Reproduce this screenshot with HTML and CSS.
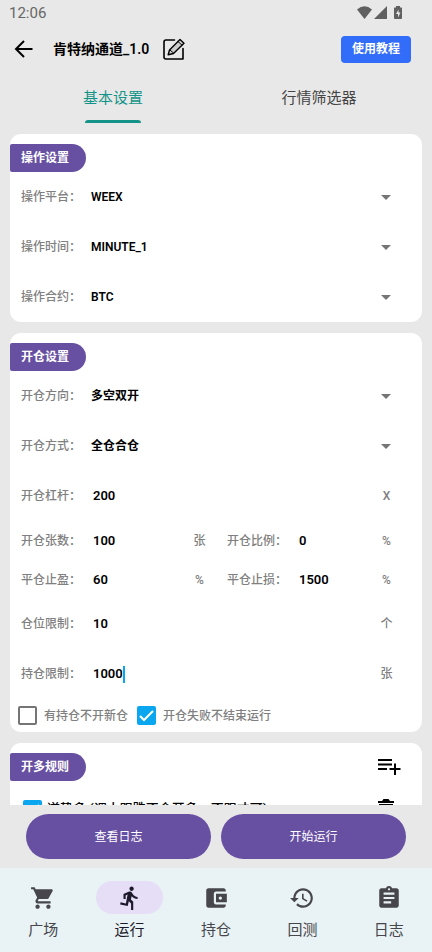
FILE: index.html
```html
<!DOCTYPE html>
<html lang="zh-CN">
<head>
  <meta charset="UTF-8">
  <meta name="viewport" content="width=device-width, initial-scale=1">
  <title>肯特纳通道_1.0</title>
  <link rel="stylesheet" href="styles.css">
</head>
<body>

  <div class="status">
    <span>12:06</span>
    <svg class="status-icons" width="48" height="16" viewBox="0 0 48 16" aria-hidden="true">
      <path d="M1 4.500Q8.500-2 16 4.500L8.500 14z"/>
      <path d="M31 1v13H18z"/>
      <path fill-rule="evenodd" d="M40 1h4v1.500h1.500q.5 0 .5.500V13q0 1-1 1h-6q-1 0-1-1V3q0-.5.500-.5H40zM42.500 4.500l-2.500 4.500h2v3.500l2.500-5h-2z"/>
    </svg>
  </div>

  <header class="header">
    <button class="icon-btn" type="button" aria-label="返回">
      <svg width="20" height="20" viewBox="0 0 20 20" fill="none" stroke="currentColor" stroke-width="2"><path d="M18.500 10H2.500M10 2L2 10l8 8"/></svg>
    </button>
    <h1 class="title">肯特纳通道_1.0</h1>
    <button class="icon-btn" type="button" aria-label="编辑">
      <svg width="22" height="22" viewBox="0 0 22 22" fill="none" stroke="currentColor" stroke-width="1.600" stroke-linejoin="round" stroke-linecap="round">
        <path d="M11.500 2H3Q1 2 1 4v15q0 2 2 2h17V10.500"/>
        <path fill="#ccc" stroke-width="1.400" d="M6.500 12L17 1.500l4 3.700L10.500 15.500l-5.300 1.300z"/>
        <path stroke-width="1" d="M15 3.500l4 3.700M7 12l3.500 3"/>
      </svg>
    </button>
    <a class="tutorial" href="#tutorial">使用教程</a>
  </header>

  <nav class="tabs">
    <a class="tab is-active" href="#basic">基本设置</a>
    <a class="tab" href="#filter">行情筛选器</a>
  </nav>

  <main class="content">
    <section class="card">
      <h2 class="badge">操作设置</h2>
      <div class="row">
        <label for="platform">操作平台：</label>
        <select id="platform"><option>WEEX</option></select>
      </div>
      <div class="row">
        <label for="period">操作时间：</label>
        <select id="period"><option>MINUTE_1</option></select>
      </div>
      <div class="row">
        <label for="contract">操作合约：</label>
        <select id="contract"><option>BTC</option></select>
      </div>
    </section>

    <section class="card">
      <h2 class="badge">开仓设置</h2>
      <div class="row">
        <label for="direction">开仓方向：</label>
        <select id="direction"><option>多空双开</option></select>
      </div>
      <div class="row">
        <label for="mode">开仓方式：</label>
        <select id="mode"><option>全仓合仓</option></select>
      </div>
      <div class="row">
        <label for="lever">开仓杠杆：</label>
        <input id="lever" type="text" inputmode="numeric" value="200">
        <span class="unit">X</span>
      </div>
      <div class="pair">
        <div class="row">
          <label for="count">开仓张数：</label>
          <input id="count" type="text" inputmode="numeric" value="100">
          <span class="unit">张</span>
        </div>
        <div class="row">
          <label for="ratio">开仓比例：</label>
          <input id="ratio" type="text" inputmode="numeric" value="0">
          <span class="unit">%</span>
        </div>
        <div class="row">
          <label for="profit">平仓止盈：</label>
          <input id="profit" type="text" inputmode="numeric" value="60">
          <span class="unit">%</span>
        </div>
        <div class="row">
          <label for="loss">平仓止损：</label>
          <input id="loss" type="text" inputmode="numeric" value="1500">
          <span class="unit">%</span>
        </div>
      </div>
      <div class="row">
        <label for="slots">仓位限制：</label>
        <input id="slots" type="text" inputmode="numeric" value="10">
        <span class="unit">个</span>
      </div>
      <div class="row">
        <label for="hold">持仓限制：</label>
        <input id="hold" class="is-editing" type="text" inputmode="numeric" value="1000">
        <span class="caret"></span>
        <span class="unit">张</span>
      </div>
      <div class="checks">
        <label class="check"><input type="checkbox">有持仓不开新仓</label>
        <label class="check"><input type="checkbox" checked>开仓失败不结束运行</label>
      </div>
    </section>

    <section class="card">
      <div class="card-head">
        <h2 class="badge">开多规则</h2>
        <button class="icon-btn" type="button" aria-label="添加规则">
          <svg width="24" height="18" viewBox="0 0 24 18" fill="currentColor"><path d="M1 1h14v2H1zM1 5.500h14v2H1zM1 10h9v2H1zM17 5.500h2V10h4.500v2H19v5h-2v-5h-4.500v-2H17z"/></svg>
        </button>
      </div>
      <div class="rule">
        <label class="check"><input type="checkbox" checked>逆势多 (调大跟跌不会开多，不跟才可)</label>
        <button class="icon-btn" type="button" aria-label="删除规则">
          <svg width="16" height="20" viewBox="0 0 16 20" fill="currentColor"><path d="M0 2h4l1.500-2h5L12 2h4v2H0zM1 5h14v13q0 2-2 2H3q-2 0-2-2z"/></svg>
        </button>
      </div>
    </section>
  </main>

  <div class="actions">
    <button class="action" type="button">查看日志</button>
    <button class="action" type="button">开始运行</button>
  </div>

  <nav class="bottom-nav">
    <a class="nav-item" href="#market">
      <span class="nav-icon"><svg width="26" height="26" viewBox="0 0 24 24"><path d="M7 18c-1.100 0-1.990.9-1.990 2S5.900 22 7 22s2-.9 2-2-.9-2-2-2zM1 2v2h2l3.600 7.590-1.350 2.450c-.16.280-.25.610-.25.960 0 1.100.9 2 2 2h12v-2H7.420c-.14 0-.25-.11-.25-.25l.03-.12.900-1.630h7.450c.75 0 1.410-.41 1.750-1.030l3.580-6.490A1 1 0 0 0 20 4H5.210l-.94-2H1zm16 16c-1.100 0-1.990.9-1.990 2s.89 2 1.990 2 2-.9 2-2-.9-2-2-2z"/></svg></span>
      广场
    </a>
    <a class="nav-item is-active" href="#run">
      <span class="nav-icon"><svg width="26" height="26" viewBox="0 0 24 24"><path d="M13.490 5.480c1.100 0 2-.9 2-2s-.9-2-2-2-2 .9-2 2 .9 2 2 2zm-3.600 13.900l1-4.400 2.100 2v6h2v-7.500l-2.100-2 .6-3c1.300 1.500 3.300 2.500 5.500 2.500v-2c-1.900 0-3.500-1-4.300-2.400l-1-1.600c-.4-.6-1-1-1.700-1-.3 0-.5.100-.8.100l-5.200 2.200v4.700h2v-3.400l1.800-.7-1.600 8.100-4.900-1-.4 2 7 1.400z"/></svg></span>
      运行
    </a>
    <a class="nav-item" href="#positions">
      <span class="nav-icon"><svg width="26" height="26" viewBox="0 0 24 24"><path d="M21 18v1c0 1.100-.9 2-2 2H5c-1.110 0-2-.9-2-2V5c0-1.100.89-2 2-2h14c1.100 0 2 .9 2 2v1h-9c-1.110 0-2 .9-2 2v8c0 1.100.89 2 2 2h9zm-9-2h10V8H12v8zm4-2.500c-.83 0-1.500-.67-1.500-1.500s.67-1.500 1.500-1.500 1.500.67 1.500 1.500-.67 1.500-1.500 1.500z"/></svg></span>
      持仓
    </a>
    <a class="nav-item" href="#backtest">
      <span class="nav-icon"><svg width="26" height="26" viewBox="0 0 24 24"><path d="M13 3c-4.970 0-9 4.030-9 9H1l3.890 3.890.07.14L9 12H6c0-3.870 3.130-7 7-7s7 3.130 7 7-3.130 7-7 7c-1.930 0-3.680-.79-4.940-2.060l-1.420 1.420C8.270 19.990 10.510 21 13 21c4.970 0 9-4.030 9-9s-4.030-9-9-9zm-1 5v5l4.280 2.540.72-1.210-3.500-2.080V8H12z"/></svg></span>
      回测
    </a>
    <a class="nav-item" href="#logs">
      <span class="nav-icon"><svg width="26" height="26" viewBox="0 0 24 24"><path d="M19 3h-4.180C14.400 1.840 13.300 1 12 1c-1.300 0-2.400.84-2.820 2H5c-1.100 0-2 .9-2 2v14c0 1.100.9 2 2 2h14c1.100 0 2-.9 2-2V5c0-1.100-.9-2-2-2zm-7 0c.55 0 1 .45 1 1s-.45 1-1 1-1-.45-1-1 .45-1 1-1zm2 14H7v-2h7v2zm3-4H7v-2h10v2zm0-4H7V7h10v2z"/></svg></span>
      日志
    </a>
  </nav>

</body>
</html>
```
FILE: styles.css
```css
:root {
  --purple: #6750a1;
  --teal: #149488;
  --blue: #0ba6f0;
  --gray: #808080;
}

* {
  box-sizing: border-box;
}

body {
  background: #e8e8e8;
  color: #000;
  display: flex;
  flex-direction: column;
  font: 12px/20px Roboto, "Noto Sans CJK SC", sans-serif;
  height: 100vh;
  margin: 0;
}

a {
  color: inherit;
  text-decoration: none;
}

button,
input,
select {
  color: inherit;
  font: inherit;
}

.icon-btn {
  background: none;
  border: 0;
  display: flex;
  padding: 0;
}

/* Top */
.status {
  align-items: center;
  color: #666;
  display: flex;
  font-size: 15px;
  height: 26px;
  justify-content: space-between;
  padding: 0 28px 0 9px;
}

.status-icons {
  fill: #606060;
}

.header {
  align-items: center;
  display: flex;
  height: 46px;
  padding: 0 21px 0 14px;
}

.title {
  font-size: 14px;
  font-weight: 600;
  margin: 0 14px 0 19px;
}

.tutorial {
  background: #326dfa;
  border-radius: 4px;
  color: #fff;
  font-weight: 700;
  line-height: 27px;
  margin-left: auto;
  padding: 0 11px;
}

.tabs {
  display: flex;
  height: 51px;
  padding: 0 10px;
}

.tab {
  align-items: center;
  color: #444;
  display: flex;
  flex: 1;
  flex-direction: column;
  font-size: 15px;
  line-height: 49px;
  padding-top: 2px;
}

.tab.is-active {
  color: var(--teal);
}

.tab.is-active::after {
  background: var(--teal);
  border-radius: 3px 3px 0 0;
  content: "";
  flex: none;
  height: 3px;
  margin-top: -3px;
  width: 56px;
}

/* Cards */
.content {
  display: flex;
  flex: 1;
  flex-direction: column;
  gap: 11px;
  min-height: 0;
  overflow-y: auto;
  padding: 11px 10px 0;
  scrollbar-width: none;
}

.card {
  background: #fff;
  border-radius: 11px;
  flex: none;
  padding-top: 10px;
}

.card-head {
  align-items: center;
  display: flex;
  justify-content: space-between;
  padding-right: 21px;
}

.badge {
  background: var(--purple);
  border-radius: 2px 14px 14px 2px;
  color: #fff;
  font-size: 12px;
  font-weight: 600;
  line-height: 28px;
  margin: 0;
  padding: 0 17px 0 11px;
  width: fit-content;
}

.row {
  align-items: center;
  color: var(--gray);
  display: flex;
  font-weight: 500;
  height: 50px;
  padding: 0 29px 0 11px;
}

.row label {
  flex: none;
  width: 70px;
}

.row select,
.row input {
  background: transparent;
  border: 0;
  color: #000;
  flex: 1;
  font-weight: 600;
  min-width: 0;
  outline: 0;
  padding: 0;
}

.row select {
  appearance: none;
  background: url("data:image/svg+xml,%3Csvg xmlns='http://www.w3.org/2000/svg' width='10' height='5'%3E%3Cpath fill='%23757575' d='M0 0h10L5 5z'/%3E%3C/svg%3E") no-repeat right 2px center;
}

.row input {
  font-size: 13px;
  padding-left: 2px;
}

.row .is-editing {
  field-sizing: content;
  flex: none;
}

.caret {
  background: var(--blue);
  height: 17px;
  width: 2px;
}

.unit {
  margin-left: auto;
  min-width: 13px;
  text-align: center;
}

.pair {
  display: grid;
  grid-template-columns: repeat(2, minmax(0, 1fr));
}

.pair .row {
  height: 39px;
}

.pair .row:nth-child(odd) {
  padding-right: 10px;
}

.checks {
  display: flex;
  gap: 9px;
  height: 33px;
  padding-left: 8px;
}

.check {
  align-items: center;
  color: var(--gray);
  display: flex;
  font-weight: 500;
  gap: 7px;
}

.check input {
  appearance: none;
  border: 2px solid #757575;
  border-radius: 2px;
  height: 19px;
  margin: 0;
  width: 19px;
}

.check input:checked {
  background: var(--blue) url("data:image/svg+xml,%3Csvg xmlns='http://www.w3.org/2000/svg' width='15' height='15' fill='none' stroke='white' stroke-width='2'%3E%3Cpath d='M1 8l4 4 9-9'/%3E%3C/svg%3E") no-repeat center;
  border-color: var(--blue);
}

.rule {
  align-items: center;
  display: flex;
  height: 56px;
  justify-content: space-between;
  padding: 0 28px 0 13px;
}

.rule .check {
  color: #000;
  font-size: 13px;
  gap: 5px;
}

/* Bottom */
.actions {
  display: flex;
  gap: 10px;
  padding: 9px 26px;
}

.action {
  background: var(--purple);
  border: 0;
  border-radius: 23px;
  color: #fff;
  flex: 1;
  height: 45px;
}

.bottom-nav {
  background: #e9f2f4;
  display: flex;
  flex: none;
  height: 84px;
  padding-top: 13px;
}

.nav-item {
  align-items: center;
  color: #46464c;
  display: flex;
  flex: 1;
  flex-direction: column;
  font-size: 15px;
  gap: 6px;
}

.nav-icon {
  border-radius: 17px;
  display: grid;
  fill: currentColor;
  height: 33px;
  place-items: center;
  width: 67px;
}

.nav-item.is-active {
  color: #1d1a2b;
}

.is-active .nav-icon {
  background: #e6def7;
}
```
